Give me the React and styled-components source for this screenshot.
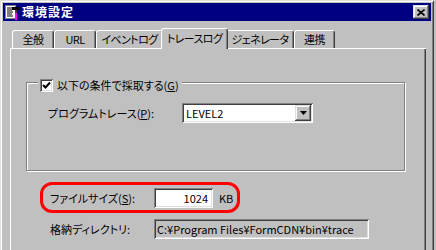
import styled, { createGlobalStyle } from "styled-components";

const GlobalStyle = createGlobalStyle`
  html, body {
    margin: 0;
    padding: 0;
    overflow: hidden;
    background: #c0c0c0;
  }
  body {
    font-family: "Noto Sans CJK JP", "Noto Sans", sans-serif;
    font-size: 11px;
    color: #000;
    font-feature-settings: "palt";
  }
`;

const Window = styled.div`
  width: 434px;
  height: 262px;
  box-sizing: border-box;
  padding: 3px;
  background: #c0c0c0;
  box-shadow: inset 1px 1px #dfdfdf, inset -1px -1px #404040,
    inset 2px 2px #fff, inset -2px -2px #808080;
`;

const TitleBar = styled.div`
  height: 18px;
  background: #000080;
  display: flex;
  align-items: center;
  padding: 0 2px 0 1px;
`;

const TitleText = styled.div`
  flex: 1;
  margin-left: 2px;
  color: #fff;
  font-weight: bold;
  font-size: 12px;
  letter-spacing: 1px;
  line-height: 18px;
`;

const RaisedButton = styled.div`
  width: ${(p) => p.w}px;
  height: ${(p) => p.h}px;
  box-sizing: border-box;
  background: #c0c0c0;
  display: flex;
  align-items: center;
  justify-content: center;
  box-shadow: inset -1px -1px #404040, inset 1px 1px #dfdfdf,
    inset -2px -2px #808080, inset 2px 2px #fff;
`;

const TabRow = styled.div`
  display: flex;
  align-items: flex-end;
  height: 20px;
  margin: 7px 0 0 7px;
  padding-left: 2px;
`;

const Tab = styled.div`
  width: ${(p) => p.w}px;
  height: ${(p) => (p.active ? 21 : 18)}px;
  margin: ${(p) => (p.active ? "0 -2px -1px" : "0")};
  padding-bottom: ${(p) => (p.active ? 3 : 1)}px;
  position: relative;
  z-index: ${(p) => (p.active ? 1 : 0)};
  box-sizing: border-box;
  background: #c0c0c0;
  border-top: 1px solid #fff;
  border-left: 1px solid #fff;
  border-right: 1px solid #404040;
  border-radius: 3px 3px 0 0;
  box-shadow: inset -1px 0 #808080;
  display: flex;
  align-items: center;
  justify-content: center;
  white-space: nowrap;
  letter-spacing: -0.6px;
`;

const Panel = styled.div`
  margin-left: 7px;
  width: 416px;
  height: 220px;
  box-sizing: border-box;
  padding: 1px;
  box-shadow: inset 1px 1px #fff, inset -1px -1px #404040,
    inset -2px -2px #808080;
`;

const GroupBox = styled.div`
  margin: 33px 0 0 15px;
  width: 379px;
  height: 89px;
  box-sizing: border-box;
  border: 1px solid #808080;
  box-shadow: 1px 1px 0 #fff, inset 1px 1px 0 #fff;
`;

const Legend = styled.div`
  display: flex;
  align-items: center;
  width: fit-content;
  height: 14px;
  margin: -5px 0 0 11px;
  padding: 0 3px 0 2px;
  background: #c0c0c0;
`;

const Check = styled.div`
  width: 13px;
  height: 13px;
  box-sizing: border-box;
  background: #fff;
  margin-right: 4px;
  display: flex;
  align-items: center;
  justify-content: center;
  box-shadow: inset 1px 1px #808080, inset -1px -1px #fff,
    inset 2px 2px #404040, inset -2px -2px #dfdfdf;
`;

const U = styled.span`
  text-decoration: underline;
`;

const Row = styled.div`
  display: flex;
  align-items: center;
  margin: ${(p) => p.m};
`;

const Label = styled.div`
  width: ${(p) => p.w}px;
  white-space: nowrap;
`;

const Sunken = styled.div`
  width: ${(p) => p.w}px;
  height: 20px;
  box-sizing: border-box;
  background: ${(p) => (p.readOnly ? "#c0c0c0" : "#fff")};
  box-shadow: inset 1px 1px #808080, inset -1px -1px #fff,
    inset 2px 2px #404040, inset -2px -2px #dfdfdf;
  display: flex;
  align-items: center;
  justify-content: ${(p) => (p.right ? "flex-end" : "space-between")};
  padding: 2px ${(p) => (p.right ? 5 : 2)}px 2px ${(p) => (p.readOnly ? 3 : 2)}px;
  white-space: nowrap;
  line-height: 16px;
`;

const SelectText = styled.span`
  padding-left: 2px;
`;

const Highlight = styled.div`
  display: flex;
  align-items: center;
  margin: 11px 0 0 29px;
  width: 200px;
  height: 31px;
  box-sizing: border-box;
  border: 3px solid #f00;
  border-radius: 12px;
  padding-left: 7px;
`;

const Unit = styled.span`
  margin-left: 6px;
`;

const AppIcon = () => (
  <svg width="16" height="16" viewBox="0 0 16 16">
    <rect x="1.5" y="1.5" width="10" height="13" fill="#fff" stroke="#808080" />
    <path d="M3 4h6M3 6h5M3 8h6M3 10h5M3 12h6" stroke="#000" strokeWidth="1" />
    <rect x="8" y="3" width="8" height="3" fill="#000" />
    <rect x="11" y="6" width="2" height="3" fill="#404040" />
    <rect x="11" y="9" width="2" height="7" fill="#ff00ff" />
  </svg>
);

const tabs = [
  { label: "全般", w: 42 },
  { label: "URL", w: 42 },
  { label: "イベントログ", w: 67 },
  { label: "トレースログ", w: 67, active: true },
  { label: "ジェネレータ", w: 68 },
  { label: "連携", w: 41 },
];

export default function App() {
  return (
    <>
      <GlobalStyle />
      <Window>
        <TitleBar>
          <AppIcon />
          <TitleText>環境設定</TitleText>
          <RaisedButton w={16} h={14}>
            <svg width="8" height="7" viewBox="0 0 8 7">
              <path d="M0.5 0.5L7.5 6.5M7.5 0.5L0.5 6.5" stroke="#000" strokeWidth="1.6" />
            </svg>
          </RaisedButton>
        </TitleBar>
        <TabRow>
          {tabs.map((t) => (
            <Tab key={t.label} w={t.w} active={t.active}>
              {t.label}
            </Tab>
          ))}
        </TabRow>
        <Panel>
          <GroupBox>
            <Legend>
              <Check>
                <svg width="9" height="9" viewBox="0 0 9 9">
                  <path d="M1 4l2.5 2.5L8 1.5" stroke="#000" strokeWidth="2" fill="none" />
                </svg>
              </Check>
              以下の条件で採取する(<U>G</U>)
            </Legend>
            <Row m="11px 0 0 21px">
              <Label w={134}>
                プログラムトレース(<U>P</U>):
              </Label>
              <Sunken w={131}>
                <SelectText>LEVEL2</SelectText>
                <RaisedButton w={16} h={16}>
                  <svg width="7" height="4" viewBox="0 0 7 4">
                    <path d="M0 0h7L3.5 4z" fill="#000" />
                  </svg>
                </RaisedButton>
              </Sunken>
            </Row>
          </GroupBox>
          <Highlight>
            <Label w={104}>
              ファイルサイズ(<U>S</U>):
            </Label>
            <Sunken w={59} right>
              1024
            </Sunken>
            <Unit>KB</Unit>
          </Highlight>
          <Row m="6px 0 0 39px">
            <Label w={104}>格納ディレクトリ:</Label>
            <Sunken w={215} readOnly>
              C:¥Program Files¥FormCDN¥bin¥trace
            </Sunken>
          </Row>
        </Panel>
      </Window>
    </>
  );
}
